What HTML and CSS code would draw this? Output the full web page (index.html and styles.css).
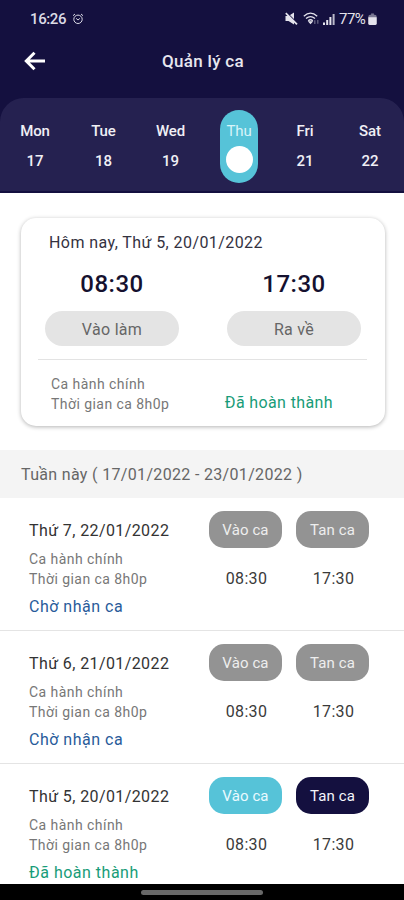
FILE: index.html
```html
<!DOCTYPE html>
<html lang="vi">
<head>
<meta charset="utf-8">
<title>Quản lý ca</title>
<link rel="stylesheet" href="styles.css">
</head>
<body>
<div class="phone">
  <header class="top">
    <div class="status">
      <span class="clock">16:26</span>
      <svg class="alarm" width="12" height="12" viewBox="0 0 12 12" fill="none" stroke="currentColor"><circle cx="6" cy="6.3" r="4.2"/><path d="M1 2.7 3 1M11 2.7 9 1M4.2 5.400 6 7l1.800-1.600"/></svg>
      <div class="indicators">
        <svg width="13" height="13" viewBox="0 0 13 13"><path d="M.5 4h3L9 .5v12L3.500 9h-3z" fill="currentColor"/><path d="M2.200 1.200 13 11.800" stroke="#14103f" stroke-width="1.200"/><path d="M.8 1.200 12 12.300" stroke="currentColor" stroke-width="1.700"/></svg>
        <svg class="wifi" width="17" height="13" viewBox="0 0 17 13" fill="none" stroke="currentColor" stroke-width="1.3"><path d="M.8 4.2Q7.500-2 14.200 4.200M3 6.500q4.500-3.800 9 0M5.200 8.800q2.300-2 4.600 0"/><path d="m6.200 9.800 1.300 1.400 1.300-1.400z" fill="currentColor"/><path d="M11.800 12V8.200M14.800 8v3.800" opacity=".4"/></svg>
        <svg class="signal" width="12" height="12" viewBox="0 0 12 12" fill="currentColor"><path d="M0 9.500h2V12H0zM3.200 7h2v5h-2zM6.400 4h2v8h-2z"/><path d="M9.600 1h2v11h-2z" opacity=".8"/></svg>
        <span class="percent">77%</span>
        <svg class="battery" width="9" height="12" viewBox="0 0 9 13" fill="currentColor"><path d="M3 .5h3V2H3z" opacity=".5"/><rect y="2" width="9" height="11" rx="2" opacity=".5"/><path d="M0 4.500h9V11a2 2 0 0 1-2 2H2a2 2 0 0 1-2-2z"/></svg>
      </div>
    </div>
    <div class="titlebar">
      <svg class="back" width="22" height="20" viewBox="0 0 22 20" fill="none" stroke="#fff" stroke-width="3"><path d="M21 10H3M10.500 1.800 2.300 10l8.200 8.200"/></svg>
      <h1>Quản lý ca</h1>
    </div>
  </header>
  <nav class="week">
    <div class="day"><span>Mon</span><b>17</b></div>
    <div class="day"><span>Tue</span><b>18</b></div>
    <div class="day"><span>Wed</span><b>19</b></div>
    <div class="day active"><span>Thu</span><i></i></div>
    <div class="day"><span>Fri</span><b>21</b></div>
    <div class="day"><span>Sat</span><b>22</b></div>
  </nav>
  <section class="today">
    <h2>Hôm nay, Thứ 5, 20/01/2022</h2>
    <div class="punches">
      <div class="punch"><strong>08:30</strong><button>Vào làm</button></div>
      <div class="punch"><strong>17:30</strong><button>Ra về</button></div>
    </div>
    <div class="summary">
      <p class="info">Ca hành chính<br>Thời gian ca 8h0p</p>
      <span class="state done">Đã hoàn thành</span>
    </div>
  </section>
  <h3 class="range">Tuần này ( 17/01/2022 - 23/01/2022 )</h3>
  <main class="shifts">
    <article class="shift">
      <div class="detail"><h4>Thứ 7, 22/01/2022</h4><p class="info">Ca hành chính<br>Thời gian ca 8h0p</p><span class="state waiting">Chờ nhận ca</span></div>
      <div class="slot"><button>Vào ca</button><time>08:30</time></div>
      <div class="slot"><button>Tan ca</button><time>17:30</time></div>
    </article>
    <article class="shift">
      <div class="detail"><h4>Thứ 6, 21/01/2022</h4><p class="info">Ca hành chính<br>Thời gian ca 8h0p</p><span class="state waiting">Chờ nhận ca</span></div>
      <div class="slot"><button>Vào ca</button><time>08:30</time></div>
      <div class="slot"><button>Tan ca</button><time>17:30</time></div>
    </article>
    <article class="shift">
      <div class="detail"><h4>Thứ 5, 20/01/2022</h4><p class="info">Ca hành chính<br>Thời gian ca 8h0p</p><span class="state done">Đã hoàn thành</span></div>
      <div class="slot"><button class="cyan">Vào ca</button><time>08:30</time></div>
      <div class="slot"><button class="navy">Tan ca</button><time>17:30</time></div>
    </article>
  </main>
  <footer class="home"><span></span></footer>
</div>
</body>
</html>
```
FILE: styles.css
```css
* { box-sizing: border-box; }
body { margin: 0; font-family: Roboto, sans-serif; background: #fff; }
h1, h2, h3, h4, p { margin: 0; font-weight: 400; }
button { border: 0; padding: 0; font: inherit; display: block; }
.phone { width: 404px; height: 900px; display: flex; flex-direction: column; overflow: hidden; }

.top { height: 98px; flex: none; background: #14103f; color: #fff; }
.status { height: 36px; padding: 1px 27px 0 30px; display: flex; align-items: center; color: #dcdbe6; }
.clock { font-size: 15px; font-weight: 500; letter-spacing: -.4px; width: 36px; }
.alarm { margin-left: 6px; }
.indicators { margin-left: auto; display: flex; align-items: center; color: #e4e3ec; }
.wifi { margin-left: 5px; }
.signal { margin-left: 3px; }
.percent { margin-left: 4px; width: 28px; font-size: 15px; letter-spacing: -.5px; font-weight: 400; white-space: nowrap; }
.battery { margin-left: 1px; }
.titlebar { height: 50px; display: grid; grid-template-columns: 57px 1fr 55px; align-items: center; }
.back { margin-left: 24px; }
h1 { text-align: center; font-size: 17px; font-weight: 500; letter-spacing: .3px; color: #e7e6ee; }

.week { height: 95px; flex: none; display: grid; grid-template-columns: 70px 67px 67px 70px 62px 68px; justify-items: center; align-items: start; padding-top: 12px; background: linear-gradient(#252150, #252150) padding-box, #14103f; border-bottom: 2px solid #14103f; border-radius: 24px 24px 0 0; box-shadow: 0 -24px 0 24px #14103f; clip-path: inset(-24px 0 0); }
.day { width: 45px; display: flex; flex-direction: column; align-items: center; font-size: 15px; line-height: 18px; padding-top: 12px; color: #f0eff5; font-weight: 500; letter-spacing: -.1px; }
.day b { font-weight: 500; margin-top: 12px; }
.active { width: 38px; height: 73px; border-radius: 19px; background: #56c3d8; color: #d9f4f8; font-weight: 400; }
.active i { width: 27px; height: 27px; border-radius: 50%; background: #fff; margin-top: 6px; }

.today { flex: none; margin: 25px 19px 0 21px; height: 208px; border-radius: 15px; box-shadow: 0 1px 4px rgba(0,0,0,.3); padding: 15px 18px 0 17px; background: #fff; }
h2 { margin-left: 11px; font-size: 16px; line-height: 20px; letter-spacing: .42px; color: #34323f; }
.punches { display: flex; justify-content: space-between; padding: 14px 6px 13px 7px; border-bottom: 1px solid #e3e3e3; }
.punch { width: 134px; text-align: center; }
.punch strong { display: block; font-size: 24px; line-height: 34px; font-weight: 500; color: #15112f; letter-spacing: .5px; }
.punch button { width: 134px; height: 35px; margin-top: 10px; border-radius: 18px; background: #e4e4e4; color: #666; font-size: 16px; line-height: 37px; letter-spacing: .3px; }
.summary { display: flex; justify-content: space-between; align-items: flex-end; padding: 14px 34px 0 13px; }
.info { font-size: 14px; line-height: 20px; letter-spacing: .45px; color: #777; }
.state { font-size: 16px; line-height: 22px; letter-spacing: .38px; }
.done { color: #189c78; }
.waiting { color: #285b9a; }

.range { flex: none; margin-top: 24px; height: 48px; line-height: 49px; padding-left: 21px; background: #f4f4f4; color: #666; font-size: 16px; letter-spacing: .33px; }

.shifts { flex: 1; min-height: 0; overflow: hidden; }
.shift { height: 133px; border-bottom: 1px solid #e4e4e4; display: flex; padding: 13px 0 0 29px; }
.detail { width: 180px; }
h4 { font-size: 16px; line-height: 20px; margin: 10px 0 8px; letter-spacing: .4px; color: #333; }
.detail .state { display: block; margin-top: 7px; letter-spacing: .5px; }
.slot { width: 73px; margin-right: 14px; text-align: center; }
.slot button { width: 73px; height: 37px; border-radius: 15px; background: #939393; color: #eee; font-size: 15px; line-height: 39px; letter-spacing: .1px; }
.slot .cyan { background: #56c3d8; color: #eafaff; }
.slot .navy { background: #14103f; color: #f5f5fa; }
.slot time { display: block; margin: 21px -1px 0 1px; font-size: 16px; line-height: 20px; letter-spacing: .3px; color: #3a3a3a; }

.home { height: 16px; flex: none; background: #000; display: flex; justify-content: center; align-items: center; }
.home span { width: 122px; height: 5px; border-radius: 3px; background: #686868; }
```
